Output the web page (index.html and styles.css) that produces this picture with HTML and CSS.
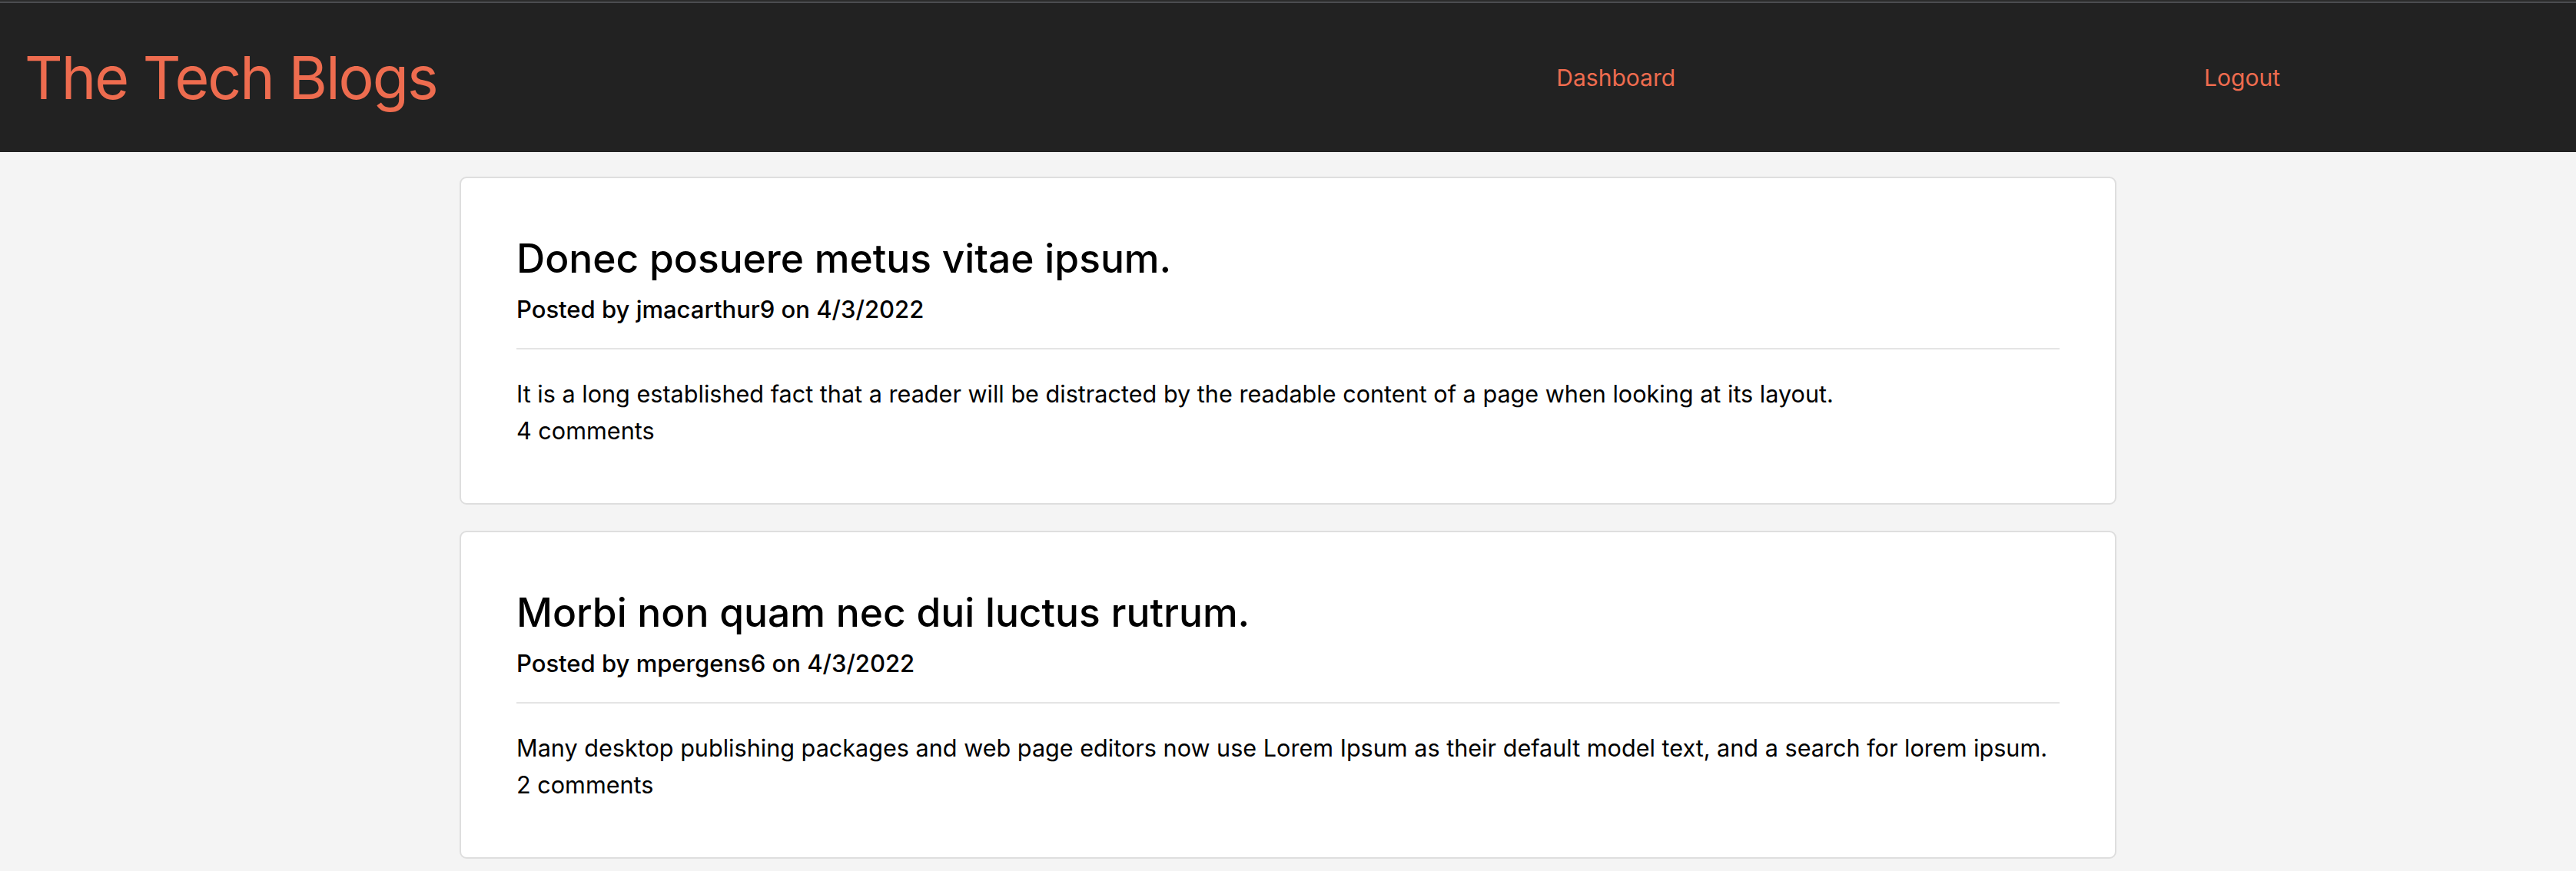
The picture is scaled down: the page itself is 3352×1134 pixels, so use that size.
FILE: index.html
```html
<!DOCTYPE html>
<html lang="en">
<head>
<meta charset="utf-8">
<title>The Tech Blogs</title>
<link rel="stylesheet" href="styles.css">
</head>
<body>
<header class="site-header">
  <h1 class="brand"><a href="#">The Tech Blogs</a></h1>
  <nav class="nav">
    <a class="nav-link" href="#">Dashboard</a>
    <a class="nav-link" href="#">Logout</a>
  </nav>
</header>
<main class="posts">
  <article class="post">
    <h2 class="post-title">Donec posuere metus vitae ipsum.</h2>
    <p class="post-meta">Posted by jmacarthur9 on 4/3/2022</p>
    <hr class="post-rule">
    <p class="post-body">It is a long established fact that a reader will be distracted by the readable content of a page when looking at its layout.</p>
    <p class="post-comments">4 comments</p>
  </article>
  <article class="post">
    <h2 class="post-title">Morbi non quam nec dui luctus rutrum.</h2>
    <p class="post-meta">Posted by mpergens6 on 4/3/2022</p>
    <hr class="post-rule">
    <p class="post-body">Many desktop publishing packages and web page editors now use Lorem Ipsum as their default model text, and a search for lorem ipsum.</p>
    <p class="post-comments">2 comments</p>
  </article>
</main>
</body>
</html>
```

FILE: styles.css
```css
* { box-sizing: border-box; }

html, body {
  margin: 0;
  padding: 0;
}

body {
  background: #f4f4f4;
  font-family: Inter, "Noto Sans", "Liberation Sans", sans-serif;
  color: #000;
}

.site-header {
  height: 198px;
  display: flex;
  align-items: center;
  padding: 4px 385px 0 32px;
  background: linear-gradient(#2b2b2b 0 2px, #4b4c50 2px 4px, #222 4px);
}

.brand {
  margin: 0;
  font-size: 77px;
  font-weight: 400;
  letter-spacing: -2px;
  line-height: 1;
}

.brand a,
.nav-link {
  color: #ee6c4f;
  text-decoration: none;
}

.nav {
  margin-left: auto;
  display: flex;
  gap: 688px;
}

.nav-link {
  font-size: 30px;
}

.posts {
  display: flex;
  flex-direction: column;
  align-items: center;
  gap: 34px;
  padding-top: 32px;
}

.post {
  width: 2156px;
  background: #fff;
  border: 2px solid #dedede;
  border-radius: 9px;
  padding: 73px 72px 70px 72px;
}

.post-title {
  margin: 0;
  font-size: 51.5px;
  font-weight: 500;
  line-height: 62px;
}

.post-meta {
  margin: 13px 0 0;
  font-size: 31px;
  font-weight: 500;
  line-height: 45px;
}

.post-rule {
  margin: 28px 0 34px;
  border: 0;
  height: 2px;
  background: #e4e4e4;
}

.post-body,
.post-comments {
  margin: 0;
  font-size: 30.6px;
  line-height: 48px;
}
```
